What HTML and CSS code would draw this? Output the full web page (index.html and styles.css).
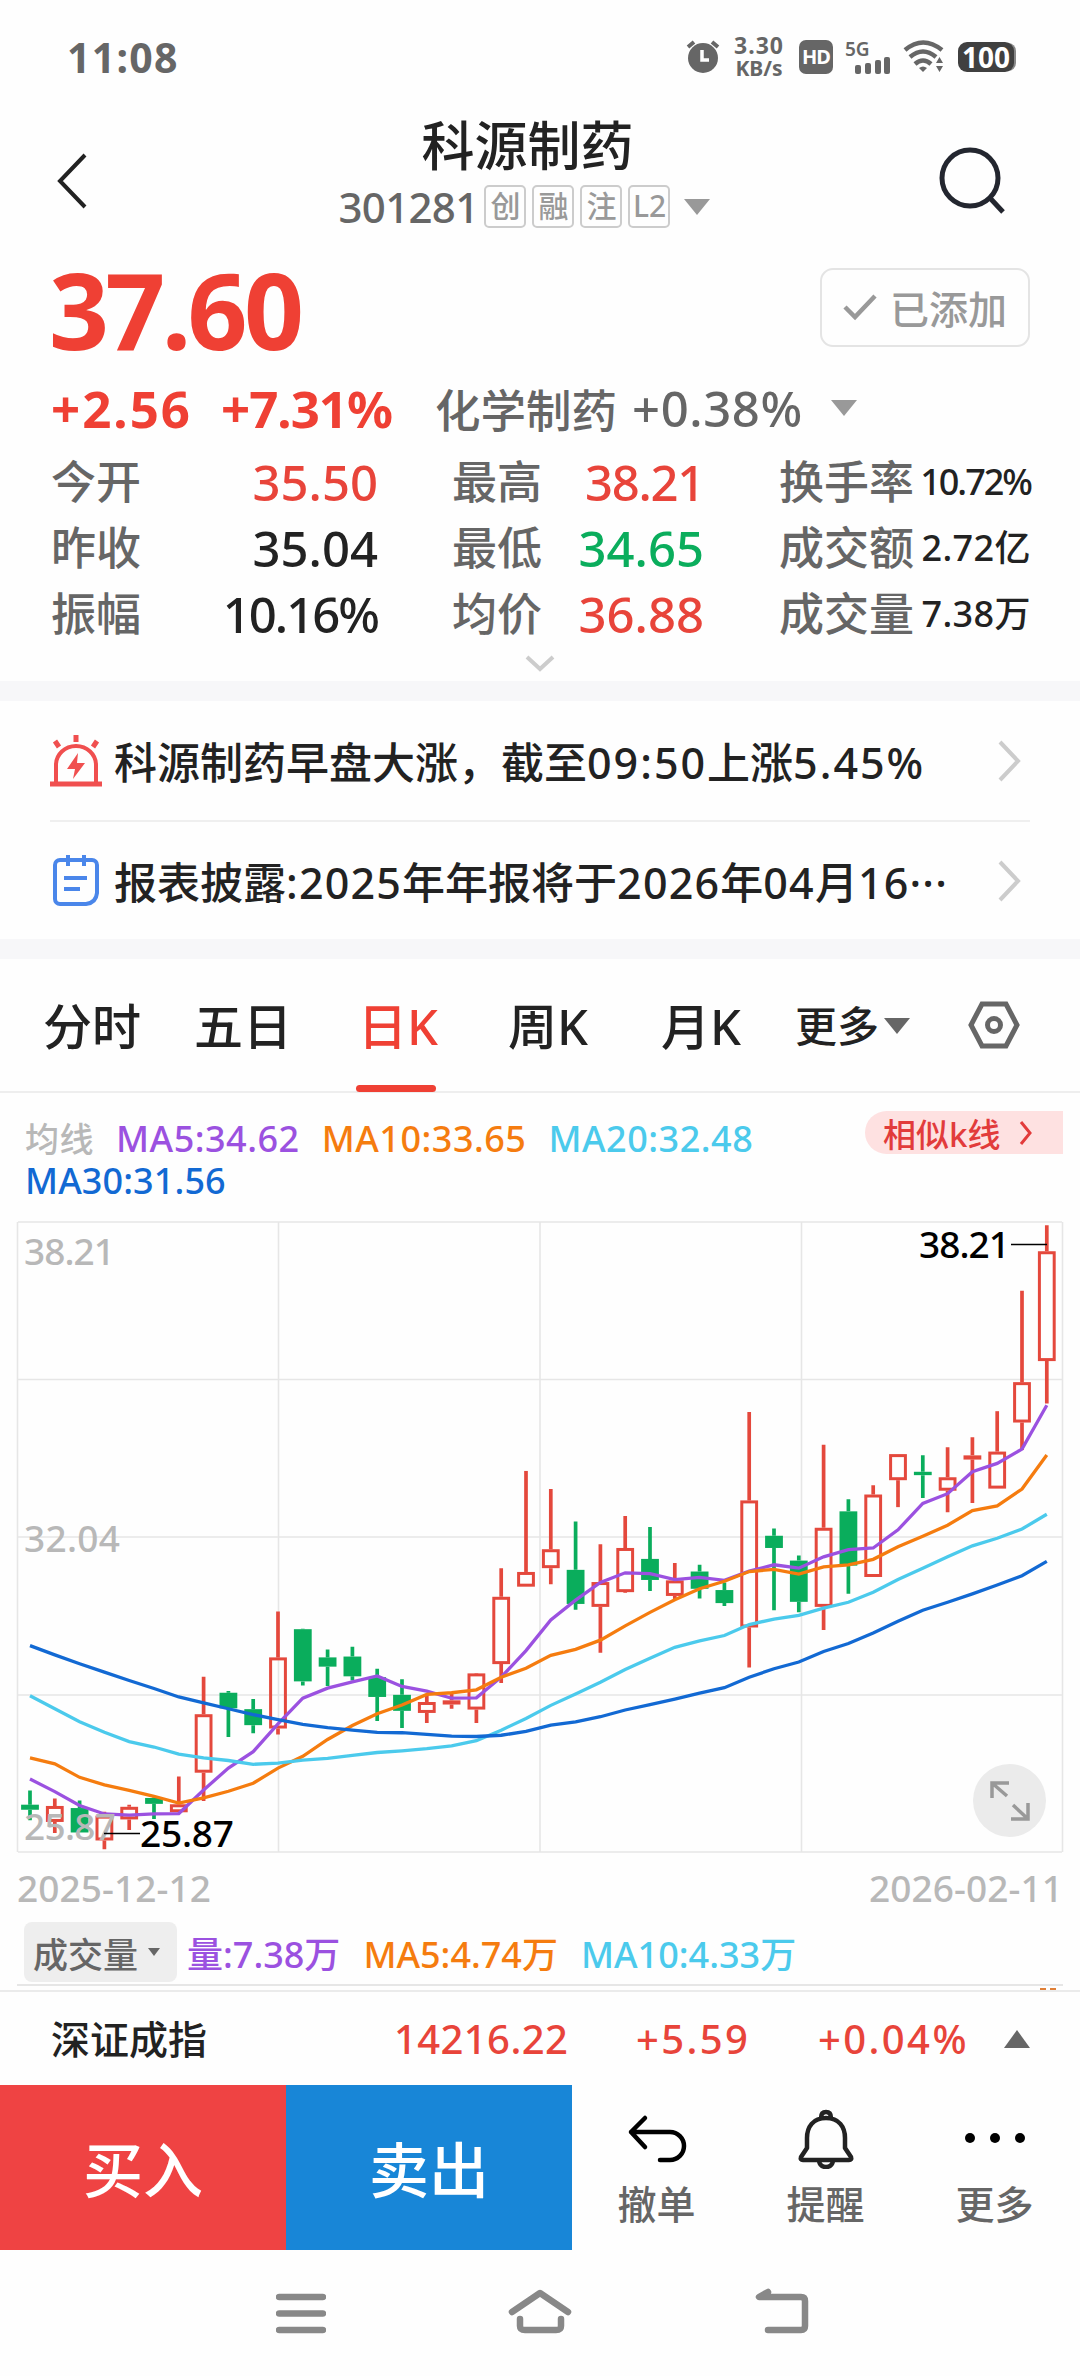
FILE: index.html
```html
<!DOCTYPE html>
<html lang="zh-CN">
<head>
    <meta charset="UTF-8">
    <meta name="viewport" content="width=device-width, initial-scale=1.0">
    <title>科源制药 301281</title>
    <link rel="stylesheet" href="styles.css">
</head>
<body>
    <div class="status-bar">
        <span class="time">11:08</span>
        <div class="status-icons">
            <svg class="alarm" width="34" height="34" viewBox="0 0 34 34">
                <circle cx="17" cy="18" r="15" fill="#666"/>
                <path d="M2 7 L8 2 M32 7 L26 2" stroke="#666" stroke-width="4"/>
                <path d="M16 10 V20 H23" fill="none" stroke="#fff" stroke-width="3.5"/>
            </svg>
            <div class="speed"><span>3.30</span><span>KB/s</span></div>
            <span class="hd">HD</span>
            <svg class="signal" width="46" height="40" viewBox="0 -4 46 40">
                <text x="0" y="15" class="signal-text">5G</text>
                <g fill="#666">
                    <rect x="10" y="24" width="6" height="9" rx="2"/>
                    <rect x="20" y="22" width="6" height="11" rx="2"/>
                    <rect x="30" y="19" width="6" height="14" rx="2"/>
                    <rect x="39" y="16" width="6" height="17" rx="2"/>
                </g>
            </svg>
            <svg class="wifi" width="42" height="34" viewBox="0 0 42 34">
                <g fill="none" stroke="#666" stroke-width="4.5">
                    <path d="M2 10 Q20 -5 39 10"/>
                    <path d="M7 17 Q20 6 33 17"/>
                    <path d="M12 24 Q20 17 28 24"/>
                </g>
                <path d="M16 28 Q20 25 24 28 L20 32Z M33 23 L36.500 17 L40 23Z M33 26 L36.500 32 L40 26Z" fill="#666"/>
            </svg>
            <span class="battery">100</span>
        </div>
    </div>

    <header class="header">
        <svg class="back" width="36" height="60" viewBox="0 0 36 60">
            <path d="M31 4 L6 30 L31 56" fill="none" stroke="#222" stroke-width="4"/>
        </svg>
        <div class="stock">
            <h1>科源制药</h1>
            <div class="code-row">
                <span class="code">301281</span>
                <span class="tag">创</span>
                <span class="tag">融</span>
                <span class="tag">注</span>
                <span class="tag">L2</span>
                <i class="arrow-down"></i>
            </div>
        </div>
        <svg class="search" width="70" height="70" viewBox="0 0 70 70">
            <circle cx="33" cy="32" r="28" fill="none" stroke="#23262f" stroke-width="5"/>
            <path d="M53 52 L66 66" stroke="#23262f" stroke-width="5"/>
        </svg>
    </header>

    <section class="price-row">
        <span class="price">37.60</span>
        <button class="added">
            <svg width="34" height="30" viewBox="0 0 34 30"><path d="M2 15 L12 25 L32 4" fill="none" stroke="#999" stroke-width="4.500"/></svg>
            <span>已添加</span>
        </button>
    </section>

    <section class="change-row">
        <span class="change">+2.56</span>
        <span class="percent">+7.31%</span>
        <span class="sector">化学制药</span>
        <span class="sector-percent">+0.38%</span>
        <i class="arrow-down"></i>
    </section>

    <section class="stats">
        <span>今开</span><b class="red">35.50</b><span>最高</span><b class="red high">38.21</b><span>换手率</span><b class="small tight">10.72%</b>
        <span>昨收</span><b>35.04</b><span>最低</span><b class="green">34.65</b><span>成交额</span><b class="small">2.72亿</b>
        <span>振幅</span><b class="tight">10.16%</b><span>均价</span><b class="red">36.88</b><span>成交量</span><b class="small">7.38万</b>
    </section>
    <div class="expand">
        <svg width="32" height="20" viewBox="0 0 32 20"><path d="M3 3 L16 15 L29 3" fill="none" stroke="#ccc" stroke-width="4"/></svg>
    </div>

    <section class="news">
        <div class="news-item">
            <svg width="52" height="52" viewBox="0 0 52 52" fill="none" stroke="#f04f4f" stroke-width="4">
                <path d="M6 47 V30 a20 19 0 0 1 40 0 V47"/>
                <path d="M0 49 H52" stroke-width="5"/>
                <path d="M26 0 V7 M5 6 L9 12 M47 6 L43 12" stroke-width="5"/>
                <path d="M28 18 L17 34 H25 L23 44 L35 28 H27Z" fill="#f04f4f" stroke="none"/>
            </svg>
            <p>科源制药早盘大涨，截至<span class="num-wide">09:50</span>上涨<span class="num-wide">5.45%</span></p>
            <svg class="more" width="24" height="44" viewBox="0 0 24 44"><path d="M2 3 L20 22 L2 41" fill="none" stroke="#ccc" stroke-width="4"/></svg>
        </div>
        <div class="news-item">
            <svg width="52" height="52" viewBox="0 0 52 52" fill="none" stroke="#4a86ea" stroke-width="4">
                <path d="M10 5 H42 a5 5 0 0 1 5 5 V38 Q46 48 36 49 H10 a5 5 0 0 1 -5 -5 V10 a5 5 0 0 1 5 -5Z"/>
                <path d="M18 0 V11 M34 0 V11 M14 23 H37 M14 34 H30"/>
            </svg>
            <p>报表披露<span class="num">:2025</span>年年报将于<span class="num">2026</span>年<span class="num">04</span>月<span class="num">16···</span></p>
            <svg class="more" width="24" height="44" viewBox="0 0 24 44"><path d="M2 3 L20 22 L2 41" fill="none" stroke="#ccc" stroke-width="4"/></svg>
        </div>
    </section>

    <nav class="tabs">
        <span>分时</span>
        <span>五日</span>
        <span class="active">日K</span>
        <span>周K</span>
        <span>月K</span>
        <span class="tab-more">更多<i class="arrow-down"></i></span>
        <svg width="52" height="48" viewBox="0 0 52 48" fill="none" stroke="#666">
            <path d="M14 3 H38 L49 24 L38 45 H14 L3 24Z" stroke-width="5"/>
            <circle cx="26" cy="24" r="6.500" stroke-width="5"/>
        </svg>
    </nav>

    <section class="ma-legend">
        <div class="ma-list">
            <span class="label">均线</span>
            <span class="ma5">MA5:34.62</span>
            <span class="ma10">MA10:33.65</span>
            <span class="ma20">MA20:32.48</span>
            <span class="ma30">MA30:31.56</span>
        </div>
        <div class="similar">
            <span>相似k线</span>
            <svg width="16" height="26" viewBox="0 0 16 26"><path d="M3 2 L12 13 L3 24" fill="none" stroke="#e23b3b" stroke-width="3"/></svg>
        </div>
    </section>

    <div class="chart">
        <svg id="kline" width="1080" height="660" viewBox="0 0 1080 660"></svg>
        <button class="fullscreen">
            <svg width="44" height="44" viewBox="0 0 44 44" fill="none" stroke="#999" stroke-width="3.500">
                <path d="M4 19 V4 H21 M4 4 L19 17 M40 24 V40 H23 M40 40 L25 26"/>
            </svg>
        </button>
    </div>
    <div class="dates"><span>2025-12-12</span><span>2026-02-11</span></div>

    <section class="volume">
        <span class="selector">成交量<i class="arrow-down"></i></span>
        <span class="ma5">量:7.38万</span>
        <span class="ma10">MA5:4.74万</span>
        <span class="ma20">MA10:4.33万</span>
    </section>
    <div class="volume-top"><i></i><i></i></div>

    <section class="index-bar">
        <span class="index-name">深证成指</span>
        <span class="index-value">14216.22</span>
        <span class="index-change">+5.59</span>
        <span class="index-change">+0.04%</span>
        <i class="arrow-up"></i>
    </section>

    <footer class="actions">
        <button class="buy">买入</button>
        <button class="sell">卖出</button>
        <div class="action">
            <svg width="60" height="60" viewBox="0 0 60 60" fill="none" stroke="#000" stroke-width="4.500" stroke-linecap="round" stroke-linejoin="round">
                <path d="M18 9 L4 23 L18 38 M4 23 H43 a14 14 0 0 1 0 28 H33"/>
            </svg>
            <span>撤单</span>
        </div>
        <div class="action">
            <svg width="60" height="60" viewBox="0 0 60 60" fill="none" stroke="#222" stroke-width="4.500" stroke-linejoin="round">
                <path d="M30 9 C17 9 11 18 11 29 V39 L5 48 Q4 51 7 51 H53 Q56 51 55 48 L49 39 V29 C49 18 43 9 30 9Z"/>
                <path d="M25 9 Q25 3 30 3 Q35 3 35 9 M23 52 Q24 58 30 58 Q36 58 37 52"/>
            </svg>
            <span>提醒</span>
        </div>
        <div class="action">
            <svg width="60" height="60" viewBox="0 0 60 60">
                <circle cx="5" cy="29" r="5"/><circle cx="30" cy="29" r="5"/><circle cx="55" cy="29" r="5"/>
            </svg>
            <span>更多</span>
        </div>
    </footer>

    <div class="system-nav">
        <svg width="50" height="50" viewBox="0 0 50 50" stroke="#888" stroke-width="6.500" stroke-linecap="round">
            <path d="M3 9 H47 M3 25.500 H47 M3 42 H47"/>
        </svg>
        <svg width="64" height="50" viewBox="0 0 64 50" fill="none" stroke="#888" stroke-width="6.500" stroke-linecap="round" stroke-linejoin="round">
            <path d="M4 24 L32 5 L60 24 M12 31 V38 Q12 42 17 42 H48 Q53 42 53 38 V31"/>
        </svg>
        <svg width="56" height="50" viewBox="0 0 56 50" fill="none" stroke="#888" stroke-width="6.500" stroke-linecap="round" stroke-linejoin="round">
            <path d="M14 4 L5 9 H47 Q51 9 51 13 V38 Q51 42 47 42 H14"/>
        </svg>
    </div>

    <script src="chart.js"></script>
</body>
</html>
```

FILE: styles.css
```css
html {
    height: 2376px;
    overflow: hidden;
}

body {
    margin: 0;
    width: 1080px;
    height: 2376px;
    overflow: hidden;
    background-color: #fefefe;
    color: #222;
    font-family: "Noto Sans", "Noto Sans CJK SC", sans-serif;
    font-weight: 500;
    white-space: nowrap;
}

button {
    border: none;
    padding: 0;
    background: none;
    font: inherit;
}

svg {
    display: block;
    flex-shrink: 0;
}

.red {
    color: #e8443a;
}

.green {
    color: #0aad5c;
}

.ma5 {
    color: #9b51e0;
}

.ma10 {
    color: #f57c0f;
}

.ma20 {
    color: #4bcaec;
}

.ma30 {
    color: #1269d3;
}

.arrow-down {
    border: 13px solid transparent;
    border-top: 16px solid #999;
    border-bottom: none;
}

.arrow-up {
    border: 13px solid transparent;
    border-bottom: 18px solid #666;
    border-top: none;
}

/* status bar */
.status-bar {
    height: 114px;
    padding: 0 66px 0 67px;
    display: flex;
    align-items: center;
    justify-content: space-between;
    color: #666;
}

.time {
    font-size: 41px;
    font-weight: 700;
    letter-spacing: 1.3px;
}

.status-icons {
    display: flex;
    align-items: center;
}

.speed {
    display: flex;
    flex-direction: column;
    align-items: center;
    width: 54px;
    margin: 0 13px 0 12px;
    font-size: 21px;
    line-height: 23px;
    font-weight: 700;
}

.speed span:first-child {
    font-size: 23px;
    letter-spacing: 1px;
}

.hd {
    width: 34px;
    height: 34px;
    border-radius: 7px;
    background-color: #666;
    color: #fff;
    font-size: 20px;
    line-height: 34px;
    font-weight: 700;
    text-align: center;
    letter-spacing: -1px;
}

.signal {
    margin-left: 12px;
}

.signal-text {
    font-size: 19px;
    font-weight: 600;
    fill: #666;
}

.wifi {
    margin-left: 12px;
}

.battery {
    width: 56px;
    height: 30px;
    margin-left: 13px;
    border-radius: 9px;
    background-color: #404040;
    color: #fff;
    font-size: 28px;
    line-height: 30px;
    font-weight: 700;
    text-align: center;
    box-shadow: 3px 0 0 -1px #888;
}

/* header */
.header {
    height: 134px;
    padding: 0 73px 0 54px;
    display: flex;
    align-items: center;
    justify-content: space-between;
}

.stock {
    align-self: flex-start;
    display: flex;
    flex-direction: column;
    align-items: center;
    margin-left: 22px;
}

h1 {
    margin: 3px 0 0 6px;
    font-size: 53px;
    line-height: 58px;
    font-weight: 500;
}

.code-row {
    height: 63px;
    display: flex;
    align-items: center;
    gap: 6px;
}

.code {
    font-size: 42px;
    letter-spacing: -0.7px;
    color: #666;
}

.tag {
    box-sizing: border-box;
    width: 42px;
    height: 43px;
    border: 2px solid #ccc;
    border-radius: 5px;
    color: #999;
    font-size: 30px;
    line-height: 38px;
    text-align: center;
}

.code-row .arrow-down {
    margin-left: 8px;
}

/* price */
.price-row {
    height: 118px;
    padding: 0 50px 0 49px;
    display: flex;
    align-items: center;
    justify-content: space-between;
}

.price {
    padding-top: 5px;
    font-size: 105px;
    line-height: 113px;
    font-weight: 700;
    letter-spacing: -3.7px;
    color: #ef4034;
}

.added {
    box-sizing: border-box;
    width: 210px;
    height: 79px;
    padding-bottom: 1px;
    border: 2px solid #e4e4e4;
    border-radius: 13px;
    display: flex;
    align-items: center;
    justify-content: center;
    gap: 13px;
    font-size: 39px;
    color: #999;
}

.change-row {
    height: 83px;
    padding-left: 51px;
    display: flex;
    align-items: center;
    font-size: 45.5px;
    color: #666;
}

.change, .percent {
    width: 170px;
    font-size: 51px;
    font-weight: 700;
    letter-spacing: 2px;
    color: #ef4034;
}

.percent {
    width: 214px;
    letter-spacing: -1px;
}

.sector {
    width: 197px;
}

.sector-percent {
    font-size: 49px;
    letter-spacing: 0.6px;
}

.change-row .arrow-down {
    margin-left: 28px;
}

.stats {
    padding: 0 49px 0 51px;
    display: grid;
    grid-template-columns: 130px 197px 130px 196px 132px 1fr;
    grid-auto-rows: 66px;
    align-items: center;
    font-size: 45px;
    line-height: 66px;
    color: #666;
}

.stats span:nth-child(6n + 3) {
    padding-left: 74px;
}

.stats span:nth-child(6n + 5) {
    padding-left: 75px;
}

.stats b {
    font-size: 49px;
    font-weight: 500;
    text-align: right;
    color: #222;
}

.stats .red {
    color: #e8443a;
}

.stats .green {
    color: #0aad5c;
}

.stats .high {
    letter-spacing: -1.3px;
}

.stats .small {
    font-size: 36px;
    letter-spacing: 0.4px;
}

.stats .tight {
    letter-spacing: -2px;
}

.expand {
    height: 34px;
    display: flex;
    align-items: center;
    justify-content: center;
    border-bottom: 20px solid #f7f7f9;
}

/* news */
.news {
    height: 238px;
    padding: 0 50px;
    border-bottom: 20px solid #f7f7f9;
}

.news-item {
    height: 119px;
    display: flex;
    align-items: center;
    border-bottom: 2px solid #efefef;
}

.news-item:last-child {
    height: 117px;
    border-bottom: none;
}

.news-item p {
    flex: 1;
    margin: 0 0 0 12px;
    font-size: 43px;
}

.num-wide {
    letter-spacing: 2px;
}

.num {
    letter-spacing: 1.2px;
}

.news-item .more {
    margin-right: 8px;
}

/* period tabs */
.tabs {
    height: 132px;
    padding-left: 43px;
    display: grid;
    grid-template-columns: 151px 164px 150px 153px 134px 173px auto;
    align-items: center;
    border-bottom: 2px solid #eee;
    font-size: 49px;
    line-height: 64px;
}

.tabs > span {
    padding-top: 1px;
}

.tabs .active {
    position: relative;
    color: #ef4034;
}

.tabs .active::after {
    content: "";
    position: absolute;
    left: -2px;
    bottom: -34px;
    width: 80px;
    height: 7px;
    border-radius: 4px;
    background-color: #ef4034;
}

.tab-more {
    display: flex;
    align-items: center;
    gap: 5px;
    font-size: 42px;
}

.tab-more .arrow-down {
    border-top-color: #666;
}

/* moving averages */
.ma-legend {
    height: 117px;
    display: flex;
    align-items: flex-start;
    justify-content: space-between;
    padding: 0 17px 0 25px;
}

.ma-list {
    width: 760px;
    padding-top: 25px;
    display: flex;
    flex-wrap: wrap;
    column-gap: 22px;
    font-size: 36px;
    line-height: 42px;
    letter-spacing: 0.5px;
}

.ma-list .ma30 {
    letter-spacing: 0.1px;
}

.label {
    font-size: 34px;
    color: #b8b8b8;
}

.similar {
    width: 180px;
    height: 43px;
    margin-top: 18px;
    padding-left: 18px;
    border-radius: 22px 0 0 22px;
    display: flex;
    align-items: center;
    gap: 18px;
    background-color: #fee1e1;
    color: #e23b3b;
    font-size: 33px;
}

/* chart */
.chart {
    position: relative;
    height: 660px;
}

.chart text {
    font-size: 37px;
}

.fullscreen {
    position: absolute;
    right: 34px;
    bottom: 33px;
    width: 73px;
    height: 73px;
    border-radius: 50%;
    background-color: #ebebeb;
    display: flex;
    align-items: center;
    justify-content: center;
}

.dates {
    height: 34px;
    padding: 0 17px 2px;
    display: flex;
    align-items: center;
    justify-content: space-between;
    font-size: 37px;
    letter-spacing: 0.1px;
    color: #b8b8b8;
}

.volume {
    height: 62px;
    padding: 15px 0 2px 24px;
    display: flex;
    align-items: center;
    gap: 23px;
    font-size: 36px;
}

.selector {
    box-sizing: border-box;
    width: 153px;
    height: 60px;
    margin-right: -13px;
    padding-left: 9px;
    border-radius: 8px;
    background-color: #eee;
    display: flex;
    align-items: center;
    gap: 10px;
    font-size: 35px;
    color: #666;
}

.selector .arrow-down {
    border-width: 8px 6px 0;
    border-top-color: #666;
}

.volume-top {
    height: 2px;
    margin: -1px 17px 0;
    padding: 2px 7px 0 0;
    border-top: 2px solid #e6e6e6;
    display: flex;
    justify-content: flex-end;
    gap: 4px;
}

.volume-top i {
    width: 6px;
    height: 2px;
    background-color: #e08038;
}

/* index */
.index-bar {
    height: 93px;
    padding-left: 51px;
    border-top: 2px solid #ebebeb;
    display: grid;
    grid-template-columns: 343px 242px 182px 186px auto;
    align-items: center;
    font-size: 40px;
    line-height: 56px;
    color: #e8443a;
}

.index-name {
    font-size: 39px;
    color: #222;
}

.index-value {
    letter-spacing: 0.4px;
}

.index-change {
    letter-spacing: 2.4px;
}

.index-bar .arrow-up {
    width: 0;
}

/* bottom actions */
.actions {
    height: 165px;
    display: flex;
}

.buy, .sell {
    width: 286px;
    padding-bottom: 2px;
    background-color: #ef4343;
    color: #fff;
    font-size: 60px;
}

.sell {
    background-color: #1886d7;
}

.action {
    width: 169px;
    padding-top: 24px;
    display: flex;
    flex-direction: column;
    align-items: center;
    font-size: 39px;
    line-height: 56px;
    color: #666;
}

.action span {
    margin-top: 7px;
}

.system-nav {
    height: 126px;
    padding-left: 6px;
    display: flex;
    align-items: center;
    justify-content: center;
    gap: 182px;
}
```

FILE: chart.js
```js
const svg = document.getElementById('kline');
const RED = '#e4483c';
const GREEN = '#0aad5c';
const SCALE = 2.376;
const STEP = 24.8;

// [direction, high, body top, body bottom, low]
const candles = [
    ['d', 1379, 1413, 1425, 1450], ['u', 1398, 1416, 1454, 1480], ['d', 1403, 1421, 1479, 1479],
    ['u', 1430, 1439, 1498, 1519], ['u', 1413, 1418, 1448, 1473], ['d', 1396, 1397, 1411, 1447],
    ['u', 1346, 1412, 1431, 1431], ['u', 1109, 1198, 1337, 1404], ['d', 1143, 1147, 1184, 1252],
    ['d', 1162, 1186, 1224, 1243], ['u', 954, 1063, 1232, 1246], ['d', 995, 996, 1120, 1130],
    ['d', 1044, 1063, 1085, 1131], ['d', 1038, 1061, 1108, 1118], ['d', 1090, 1110, 1157, 1214],
    ['d', 1115, 1152, 1190, 1231], ['u', 1150, 1169, 1195, 1219], ['u', 1150, 1165, 1175, 1185],
    ['u', 1100, 1101, 1187, 1219], ['u', 851, 919, 1079, 1124], ['u', 620, 860, 895, 895],
    ['u', 663, 806, 851, 889], ['d', 740, 855, 936, 950], ['u', 794, 884, 943, 1052],
    ['u', 727, 803, 908, 910], ['d', 753, 829, 879, 905], ['u', 839, 880, 917, 925],
    ['d', 843, 859, 900, 923], ['d', 885, 903, 934, 941], ['u', 480, 690, 992, 1087],
    ['d', 757, 774, 803, 951], ['d', 821, 833, 931, 956], ['u', 558, 755, 943, 998],
    ['d', 687, 716, 845, 912], ['u', 654, 676, 872, 872], ['u', 580, 580, 642, 706],
    ['d', 583, 622, 630, 684], ['u', 564, 635, 667, 718], ['u', 540, 583, 593, 696],
    ['u', 478, 574, 662, 662], ['u', 192, 409, 505, 570], ['u', 36, 98, 359, 460]
];

const averages = {
    '#9b51e0': [1352, 1382, 1415, 1435, 1438, 1435, 1434, 1378, 1326, 1287, 1221, 1160, 1136, 1121, 1107, 1132, 1143, 1160, 1159, 1110, 1047, 974, 927, 885, 862, 864, 878, 873, 880, 858, 843, 851, 824, 807, 803, 760, 697, 674, 622, 602, 568, 464],
    '#f57c0f': [1302, 1316, 1348, 1366, 1379, 1393, 1409, 1397, 1381, 1362, 1326, 1298, 1258, 1225, 1197, 1176, 1151, 1147, 1140, 1110, 1089, 1058, 1044, 1022, 988, 956, 926, 900, 882, 859, 854, 865, 848, 843, 830, 800, 775, 749, 714, 703, 663, 582],
    '#4bcaec': [1154, 1185, 1216, 1241, 1263, 1276, 1293, 1302, 1308, 1317, 1314, 1307, 1303, 1296, 1289, 1285, 1280, 1273, 1261, 1236, 1208, 1177, 1150, 1122, 1092, 1065, 1039, 1024, 1011, 985, 972, 963, 946, 932, 908, 878, 851, 824, 798, 780, 758, 723],
    '#1269d3': [1035, 1057, 1078, 1098, 1118, 1137, 1157, 1171, 1185, 1199, 1211, 1222, 1230, 1236, 1241, 1242, 1246, 1250, 1251, 1248, 1239, 1224, 1216, 1204, 1188, 1175, 1162, 1148, 1135, 1110, 1090, 1074, 1049, 1030, 1005, 977, 951, 932, 912, 891, 869, 835]
};

const px = i => 30 + i * STEP;
const py = v => v / SCALE;
let out = '';

// grid
[12, 169.5, 327, 485, 642].forEach(y => {
    out += `<path d="M18 ${y} H1062" stroke="#e6e6e6" stroke-width="1.6"/>`;
});
[17.5, 278.5, 540, 801.5, 1062.5].forEach(x => {
    out += `<path d="M${x} 12 V642" stroke="#e6e6e6" stroke-width="1.6"/>`;
});

candles.forEach(([dir, high, top, bottom, low], i) => {
    const color = dir === 'u' ? RED : GREEN;
    const x = px(i);
    const h = py(bottom - top);
    out += `<path d="M${x} ${py(high)} V${py(top)} M${x} ${py(bottom)} V${py(low)}" stroke="${color}" stroke-width="3.7"/>`;
    if (dir === 'u' && h > 5) {
        out += `<rect x="${x - 7.4}" y="${py(top) + 1.5}" width="14.8" height="${h - 3}" fill="none" stroke="${color}" stroke-width="3"/>`;
    } else {
        out += `<rect x="${x - 8.9}" y="${py(top)}" width="17.8" height="${h}" fill="${color}"/>`;
    }
});

Object.entries(averages).forEach(([color, values]) => {
    const points = values.map((v, i) => `${px(i)},${py(v)}`).join(' ');
    out += `<polyline points="${points}" fill="none" stroke="${color}" stroke-width="3.3"/>`;
});

// price labels
out += '<g fill="#b8b8b8"><text x="24" y="55" textLength="91">38.21</text>';
out += '<text x="24" y="342" textLength="96">32.04</text>';
out += '<text x="24" y="630" textLength="92">25.87</text></g>';
out += '<g fill="#000"><text x="140" y="637" textLength="94">25.87</text>';
out += '<text x="919" y="48" textLength="91">38.21</text></g>';
out += '<path d="M104 623.5 H140 M1011 34.500 H1047" stroke="#000" stroke-width="1.6"/>';

svg.innerHTML = out;
```
